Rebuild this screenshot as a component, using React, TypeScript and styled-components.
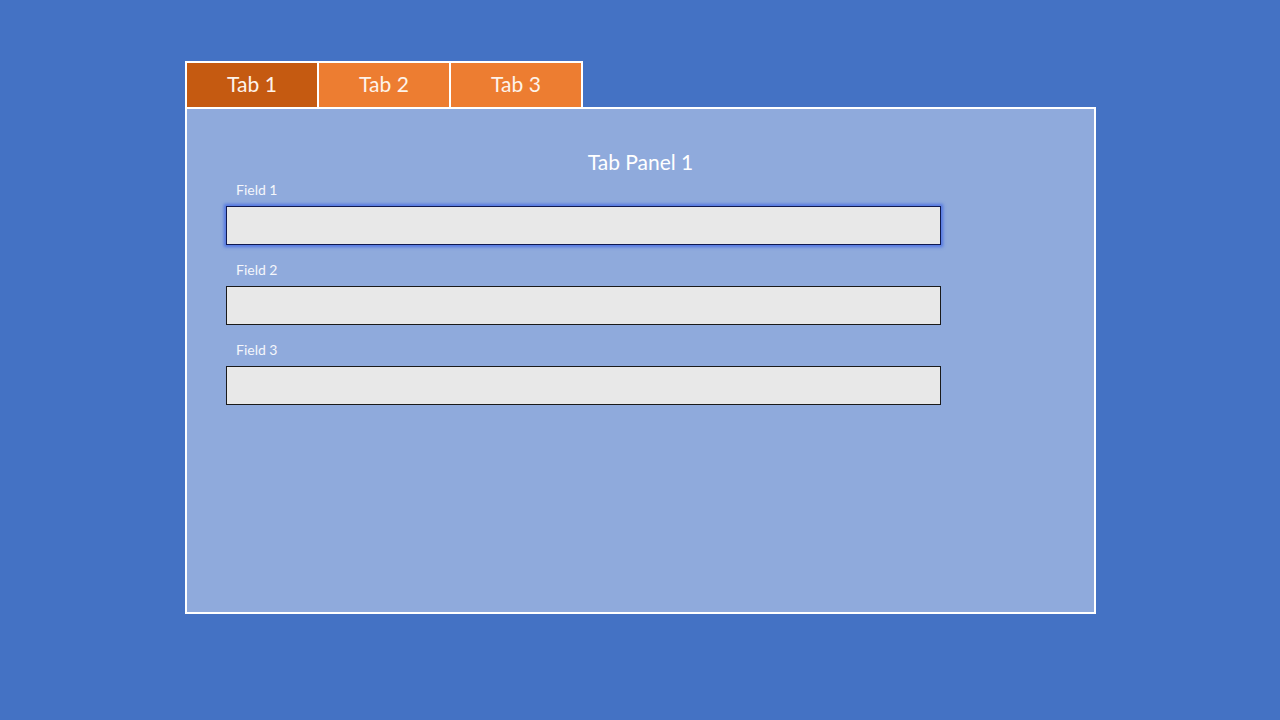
import React from 'react';
import styled, { createGlobalStyle } from 'styled-components';

const GlobalStyle = createGlobalStyle`
  html, body {
    margin: 0;
    padding: 0;
    background: #4472c4;
    font-family: Lato, "Open Sans", "Liberation Sans", sans-serif;
  }
`;

const Page = styled.div`
  width: 1280px;
  height: 720px;
  box-sizing: border-box;
  padding: 61px 0 0 185px;
  display: flex;
  flex-direction: column;
  align-items: flex-start;
`;

const TabList = styled.div`
  display: flex;
  gap: 2px;
  background: #ffffff;
  padding: 2px 2px 0 2px;
`;

const TabButton = styled.button<{ active?: boolean }>`
  width: 130px;
  height: 44px;
  border: none;
  margin: 0;
  padding: 0 0 3px 0;
  background: ${({ active }) => (active ? '#c55a11' : '#ed7d31')};
  color: #fdf3ea;
  font-family: inherit;
  font-size: 21px;
  cursor: pointer;
`;

const Panel = styled.div`
  width: 911px;
  height: 507px;
  box-sizing: border-box;
  border: 2px solid #ffffff;
  background: #8faadc;
  padding: 40px 153px 0 39px;
  display: flex;
  flex-direction: column;
`;

const PanelTitle = styled.h2`
  margin: 0 0 7px 0;
  font-size: 21px;
  font-weight: 400;
  color: #ffffff;
  text-align: center;
  padding-left: 114px;
`;

const FieldGroup = styled.div`
  display: flex;
  flex-direction: column;
  margin-bottom: 16px;
`;

const Label = styled.label`
  font-size: 14px;
  color: #f4f6fb;
  padding-left: 10px;
  margin-bottom: 8px;
`;

const Input = styled.input<{ focused?: boolean }>`
  width: 715px;
  height: 39px;
  box-sizing: border-box;
  background: #e8e8e8;
  border: 1px solid ${({ focused }) => (focused ? '#101a50' : '#1a1a1a')};
  box-shadow: ${({ focused }) => (focused ? '0 0 3px 2px rgba(60, 100, 230, 0.75)' : 'none')};
  outline: none;
  padding: 0 8px;
  font-family: inherit;
  font-size: 14px;
`;

const tabs = ['Tab 1', 'Tab 2', 'Tab 3'];
const fields = ['Field 1', 'Field 2', 'Field 3'];

export default function App() {
  return (
    <>
      <GlobalStyle />
      <Page>
        <TabList>
          {tabs.map((t, i) => (
            <TabButton key={t} active={i === 0}>
              {t}
            </TabButton>
          ))}
        </TabList>
        <Panel>
          <PanelTitle>Tab Panel 1</PanelTitle>
          {fields.map((f, i) => (
            <FieldGroup key={f}>
              <Label>{f}</Label>
              <Input focused={i === 0} />
            </FieldGroup>
          ))}
        </Panel>
      </Page>
    </>
  );
}
